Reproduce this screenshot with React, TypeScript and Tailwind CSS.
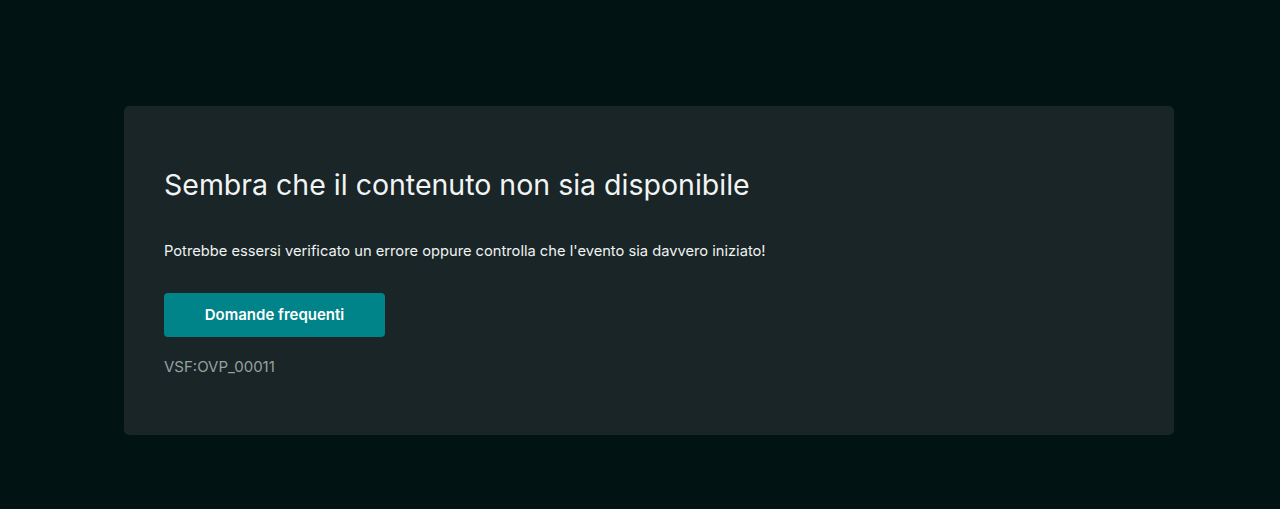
export default function App() {
  return (
    <div className="min-h-[509px] bg-[#011313] pt-[106px] font-['Inter',sans-serif]">
      <div className="ml-[124px] w-[1050px] rounded-[5px] bg-[#192526] px-10 pt-[62px] pb-[58px]">
        <h1 className="text-[28.5px] leading-[34px] font-normal text-[#f2f4f4]">
          Sembra che il contenuto non sia disponibile
        </h1>
        <p className="mt-[39px] text-[14.7px] leading-[20px] text-[#f0f2f2]">
          Potrebbe essersi verificato un errore oppure controlla che l'evento sia davvero iniziato!
        </p>
        <button className="mt-[32px] flex h-[44px] w-[221px] items-center justify-center rounded-[4px] bg-[#01838a] text-[15px] font-semibold text-white">
          Domande frequenti
        </button>
        <p className="mt-[19px] text-[15px] leading-[21px] text-[#97a1a1]">VSF:OVP_00011</p>
      </div>
    </div>
  )
}
